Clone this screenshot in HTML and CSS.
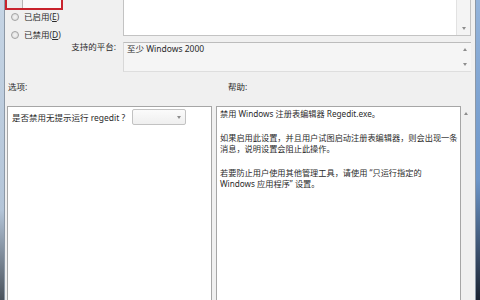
FILE: index.html
```html
<!DOCTYPE html>
<html>
<head>
    <meta charset="utf-8">
    <link rel="stylesheet" href="styles.css">
</head>
<body>
<div class="frame-left"></div>
<div class="main">
    <div class="top">
        <div class="states">
            <div class="focus-box"><span class="focus-gray"></span><span class="focus-white"></span></div>
            <div class="radio-row"><span class="radio"></span>已启用(<u>E</u>)</div>
            <div class="radio-row second"><span class="radio"></span>已禁用(<u>D</u>)</div>
        </div>
        <div class="comment">
            <div class="comment-text"></div>
            <div class="scroll"><span class="arrow-down low"></span></div>
        </div>
        <div class="platform-label">支持的平台:</div>
        <div class="platform">
            <div class="platform-text">至少 Windows 2000</div>
            <div class="scroll plain"><span class="arrow-up"></span><span class="arrow-down"></span></div>
        </div>
    </div>

    <div class="labels">
        <div class="label-options">选项:</div>
        <div class="label-help">帮助:</div>
    </div>

    <div class="panels">
        <div class="options">
            <div class="option-row">
                <span>是否禁用无提示运行 regedit ?</span>
                <span class="dropdown"><span class="arrow-down"></span></span>
            </div>
        </div>
        <div class="help">
            <p>禁用 Windows 注册表编辑器 Regedit.exe。</p>
            <p>如果启用此设置，并且用户试图启动注册表编辑器，则会出现一条<br>消息，说明设置会阻止此操作。</p>
            <p>若要防止用户使用其他管理工具，请使用 “只运行指定的<br>Windows 应用程序” 设置。</p>
        </div>
        <div class="help-scroll"><span class="arrow-up"></span></div>
    </div>
</div>
<div class="frame-right"></div>
</body>
</html>
```
FILE: styles.css
```css
body {
  margin: 0;
  width: 480px;
  height: 300px;
  overflow: hidden;
  display: flex;
  font-family: "Noto Sans", "Noto Sans CJK SC", sans-serif;
  font-size: 8.5px;
  color: #2b2b2b;
  background-color: #f0f0f0;
}

.frame-left {
  width: 4px;
  background: linear-gradient(#c6d5e5, #b4c5d8 70%, #4a525c);
}

.frame-right {
  width: 4px;
  background: linear-gradient(#94b4db, #6d96c9 60%, #1a2230);
}

.main {
  flex: 1;
  border-left: 1px solid #8c98a6;
  border-right: 1px solid #8c98a6;
  background-color: #f0f0f0;
  overflow: hidden;
}

.top {
  display: grid;
  grid-template-columns: 118px 348px;
  grid-template-rows: 42px 30px;
}

.states {
  display: flex;
  flex-direction: column;
}

.focus-box {
  display: flex;
  width: 54px;
  height: 8px;
  margin-top: -2px;
  border: 2px solid #c9232d;
}

.focus-gray {
  width: 15px;
  background-color: #ececec;
  border-right: 1px solid #b5b5b5;
}

.focus-white {
  flex: 1;
  background-color: #fafafa;
}

.radio-row {
  display: flex;
  align-items: center;
  height: 14px;
  line-height: 14px;
}

.radio-row.second {
  margin-top: 4px;
}

.radio {
  width: 6px;
  height: 6px;
  margin-left: 6px;
  margin-right: 5px;
  border: 1px solid #a3a3a3;
  border-radius: 50%;
  background: radial-gradient(#f4f4f4, #d9d9d9);
}

.comment {
  display: flex;
  height: 40px;
  margin-top: -4px;
  border: 1px solid #c3c3c3;
  border-top: none;
  box-sizing: border-box;
  background-color: #f4f4f4;
}

.comment-text {
  flex: 1;
  background-color: #ffffff;
  border-right: 1px solid #e2e2e2;
}

.scroll {
  width: 13px;
  display: flex;
  flex-direction: column;
  align-items: center;
  justify-content: flex-end;
  padding-bottom: 5px;
  box-sizing: border-box;
}

.scroll.plain {
  justify-content: space-between;
  padding: 5px 0 5px 0;
}

.platform-label {
  text-align: right;
  padding-right: 7px;
  line-height: 11px;
  margin-top: -1px;
}

.platform {
  display: flex;
  border-top: 1px solid #bcbcbc;
  border-left: 1px solid #d8d8d8;
  border-bottom: 1px solid #dedede;
  background-color: #f5f5f5;
}

.platform-text {
  flex: 1;
  padding: 0 0 0 3px;
  line-height: 11px;
}

.arrow-down,
.arrow-up {
  width: 0;
  height: 0;
  border-left: 2.5px solid transparent;
  border-right: 2.5px solid transparent;
}

.arrow-down {
  border-top: 3px solid #8d8d8d;
}

.arrow-up {
  border-bottom: 3px solid #8d8d8d;
}

.labels {
  display: flex;
  margin-top: 9px;
  line-height: 11px;
}

.label-options {
  width: 220px;
  padding-left: 3px;
}

.panels {
  display: flex;
  margin-top: 14px;
  height: 200px;
}

.options {
  width: 205px;
  margin-left: 2px;
  border: 1px solid #a6a6a6;
  box-sizing: border-box;
  background-color: #ffffff;
}

.option-row {
  display: flex;
  align-items: center;
  padding: 2px 0 0 4px;
}

.dropdown {
  display: flex;
  align-items: center;
  justify-content: flex-end;
  width: 54px;
  height: 16px;
  margin-left: 7px;
  padding-right: 4px;
  box-sizing: border-box;
  border: 1px solid #c2c2c2;
  border-radius: 2px;
  background: linear-gradient(#fbfbfb, #efefef);
}

.help {
  width: 245px;
  margin-left: 4px;
  padding: 1px 3px;
  border: 1px solid #a6a6a6;
  box-sizing: border-box;
  background-color: #ffffff;
  font-size: 8.2px;
  line-height: 11.5px;
  white-space: nowrap;
  overflow: hidden;
}

.help p {
  margin: 0 0 12px 0;
}

.help-scroll {
  width: 10px;
  display: flex;
  justify-content: center;
  padding-top: 6px;
  box-sizing: border-box;
}
```
